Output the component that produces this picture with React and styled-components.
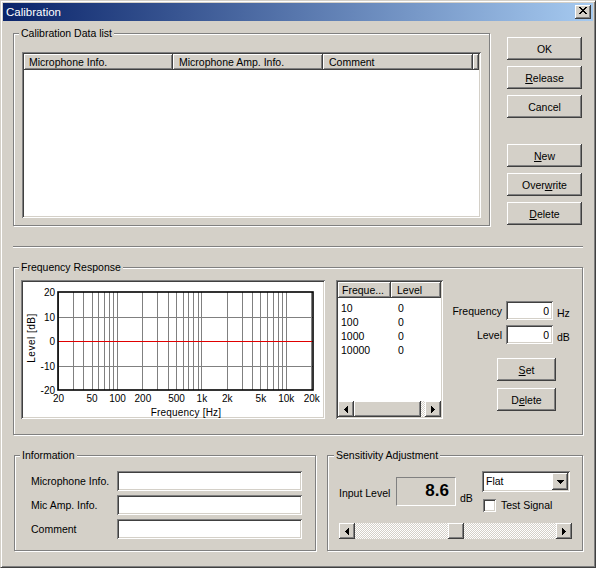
import React from "react";
import styled, { createGlobalStyle } from "styled-components";

const FACE = "#D4D0C8";

const GlobalStyle = createGlobalStyle`
  html, body { margin: 0; padding: 0; background: ${FACE}; }
  body {
    font-family: "Liberation Sans", Arial, sans-serif;
    font-size: 10.5px;
    color: #000;
  }
  *, *::before, *::after { box-sizing: border-box; }
`;

const raisedBevel = `
  background: ${FACE};
  box-shadow: inset -1px -1px #404040, inset 1px 1px #fff, inset -2px -2px #808080, inset 2px 2px ${FACE};
`;
const sunkenBevel = `
  box-shadow: inset 1px 1px #808080, inset -1px -1px #fff, inset 2px 2px #404040, inset -2px -2px ${FACE};
`;

const Window = styled.div`
  width: 596px;
  height: 568px;
  background: ${FACE};
  border: 1px solid;
  border-color: ${FACE} #404040 #404040 ${FACE};
  box-shadow: inset 1px 1px #fff, inset -1px -1px #808080;
  padding: 2px;
  display: flex;
  flex-direction: column;
  overflow: hidden;
`;

const TitleBar = styled.div`
  height: 18px;
  flex: none;
  display: flex;
  align-items: center;
  padding: 0 2px 0 2px;
  background: linear-gradient(to right, #0a246a, #a6caf0);
  color: #fff;
  font-size: 11.5px;
`;

const TitleText = styled.span`
  flex: 1;
  line-height: 18px;
  padding-left: 1px;
`;

const CloseButton = styled.div`
  width: 16px;
  height: 14px;
  ${raisedBevel}
  display: flex;
  align-items: flex-start;
  justify-content: center;
  padding-top: 2px;
`;

const Body = styled.div`
  display: flex;
  flex-direction: column;
  padding: 6px 10px 0 10px;
`;

const TopRow = styled.div`
  display: flex;
  gap: 17px;
  align-items: flex-start;
`;

const Group = styled.fieldset`
  display: block;
  margin: ${(p) => p.$mt || 0}px 0 0 ${(p) => p.$ml || 0}px;
  min-width: 0;
  width: ${(p) => p.$w}px;
  height: ${(p) => p.$h}px;
  padding: ${(p) => p.$pad};
  border: 1px solid #808080;
  box-shadow: 1px 1px 0 #fff, inset 1px 1px 0 #fff;
  flex: none;
`;

const Legend = styled.legend`
  margin-left: ${(p) => p.$lm}px;
  padding: 0 2px;
  line-height: 13px;
  background: ${FACE};
`;

const ListView = styled.div`
  display: flex;
  flex-direction: column;
  width: ${(p) => p.$w}px;
  height: ${(p) => p.$h}px;
  background: #fff;
  padding: 2px;
  ${sunkenBevel}
  flex: none;
`;

const HeaderRow = styled.div`
  display: flex;
  height: 16px;
  flex: none;
`;

const HeaderCell = styled.div`
  ${raisedBevel}
  width: ${(p) => (p.$w ? `${p.$w}px` : "auto")};
  flex: ${(p) => (p.$w ? "none" : "1")};
  padding-left: ${(p) => p.$pl || 0}px;
  line-height: 16px;
  white-space: nowrap;
  overflow: hidden;
`;

const ListBody = styled.div`
  flex: 1;
  padding-top: 3px;
`;

const ListRow = styled.div`
  display: flex;
  height: 14px;
  line-height: 14px;
`;

const ListCell = styled.div`
  width: ${(p) => p.$w}px;
  padding-left: ${(p) => p.$pl}px;
  white-space: nowrap;
`;

const HScroll = styled.div`
  display: flex;
  height: 16px;
  width: ${(p) => (p.$w ? `${p.$w}px` : "auto")};
  flex: none;
  margin-top: ${(p) => p.$mt || 0}px;
`;

const ScrollButton = styled.div`
  width: 16px;
  height: 100%;
  flex: none;
  ${raisedBevel}
  display: flex;
  align-items: center;
  justify-content: center;
`;

const ScrollTrack = styled.div`
  flex: 1;
  display: flex;
  background-color: #fff;
  background-image: repeating-conic-gradient(${FACE} 0 25%, #fff 0 50%);
  background-size: 2px 2px;
`;

const ScrollThumb = styled.div`
  ${raisedBevel}
  width: ${(p) => p.$w}px;
  height: 100%;
  flex: none;
`;

const ButtonColumn = styled.div`
  display: flex;
  flex-direction: column;
  gap: 6px;
  padding-top: 10px;
`;

const Button = styled.button`
  ${raisedBevel}
  border: none;
  outline: none;
  font: inherit;
  color: #000;
  width: ${(p) => p.$w || 75}px;
  height: 23px;
  padding: 0;
  margin-top: ${(p) => p.$mt || 0}px;
  flex: none;
`;

const Key = styled.span`
  text-decoration: underline;
`;

const Separator = styled.div`
  height: 2px;
  margin-top: 20px;
  border-top: 1px solid #808080;
  border-bottom: 1px solid #fff;
`;

const FreqRow = styled.div`
  display: flex;
`;

const ChartBox = styled.div`
  width: 304px;
  height: 139px;
  background: #fff;
  padding: 2px;
  ${sunkenBevel}
  flex: none;
  margin-right: 11px;
`;

const Controls = styled.div`
  flex: 1;
  display: flex;
  flex-direction: column;
`;

const FieldGrid = styled.div`
  display: grid;
  grid-template-columns: 59px 47px auto;
  column-gap: 4px;
  row-gap: 5px;
  margin-top: 21px;
`;

const FieldLabel = styled.span`
  justify-self: end;
  align-self: center;
`;

const Unit = styled.span`
  align-self: end;
  line-height: 13px;
`;

const TextInput = styled.input`
  border: 0;
  outline: 0;
  margin: 0;
  font: inherit;
  color: #000;
  background: #fff;
  ${sunkenBevel}
  width: ${(p) => p.$w}px;
  height: ${(p) => p.$h}px;
  padding: 0 ${(p) => (p.$right ? 4 : 3)}px;
  text-align: ${(p) => (p.$right ? "right" : "left")};
`;

const ButtonStack = styled.div`
  display: flex;
  flex-direction: column;
  gap: 7px;
  margin-top: 14px;
  padding-left: 54px;
`;

const BottomRow = styled.div`
  display: flex;
  gap: 11px;
  margin-top: 14px;
`;

const InfoGrid = styled.div`
  display: grid;
  grid-template-columns: 86px 185px;
  grid-auto-rows: 20px;
  row-gap: 4px;
  align-items: center;
`;

const SensGrid = styled.div`
  display: grid;
  grid-template-columns: 57px 60px 26px 1fr;
  grid-template-rows: 21px 13px;
  row-gap: 7px;
`;

const SensLabel = styled.span`
  grid-column: 1;
  grid-row: 1 / span 2;
  align-self: center;
  padding-top: 2px;
`;

const LevelDisplay = styled.div`
  grid-column: 2;
  grid-row: 1 / span 2;
  align-self: center;
  height: 29px;
  border: 1px solid;
  border-color: #808080 #fff #fff #808080;
  font-weight: bold;
  font-size: 17px;
  line-height: 26px;
  text-align: right;
  padding-right: 6px;
`;

const DbUnit = styled.span`
  grid-column: 3;
  grid-row: 1 / span 2;
  align-self: end;
  padding-left: 4px;
  margin-bottom: 7px;
  line-height: 13px;
`;

const Combo = styled.div`
  grid-column: 4;
  grid-row: 1;
  width: 88px;
  height: 21px;
  background: #fff;
  padding: 2px;
  ${sunkenBevel}
  display: flex;
`;

const ComboText = styled.span`
  flex: 1;
  padding-left: 2px;
  line-height: 17px;
`;

const ComboButton = styled.div`
  width: 16px;
  ${raisedBevel}
  display: flex;
  align-items: center;
  justify-content: center;
`;

const CheckRow = styled.label`
  grid-column: 4;
  grid-row: 2;
  display: flex;
  align-items: center;
  gap: 5px;
  padding-left: 1px;
  line-height: 13px;
`;

const CheckBox = styled.span`
  width: 13px;
  height: 13px;
  flex: none;
  background: #fff;
  ${sunkenBevel}
`;

const Glyph = ({ w, h, d }) => (
  <svg width={w} height={h} viewBox={`0 0 ${w} ${h}`} shapeRendering="crispEdges" style={{ display: "block" }}>
    <path d={d} fill="#000" />
  </svg>
);

const X_PATH =
  "M0 0h2v1h-2z M6 0h2v1h-2z M1 1h2v1h-2z M5 1h2v1h-2z M2 2h4v1h-4z M3 3h2v1h-2z M2 4h4v1h-4z M1 5h2v1h-2z M5 5h2v1h-2z M0 6h2v1h-2z M6 6h2v1h-2z";
const LEFT_PATH = "M3 0h1v7h-1z M2 1h1v5h-1z M1 2h1v3h-1z M0 3h1v1h-1z";
const RIGHT_PATH = "M0 0h1v7h-1z M1 1h1v5h-1z M2 2h1v3h-1z M3 3h1v1h-1z";
const DOWN_PATH = "M0 0h7v1h-7z M1 1h5v1h-5z M2 2h3v1h-3z M3 3h1v1h-1z";

const FREQS = [
  20, 30, 40, 50, 60, 70, 80, 90, 100, 200, 300, 400, 500, 600, 700, 800, 900, 1000, 2000, 3000, 4000,
  5000, 6000, 7000, 8000, 9000, 10000, 20000,
];
const X_LABELS = [
  [20, "20"],
  [50, "50"],
  [100, "100"],
  [200, "200"],
  [500, "500"],
  [1000, "1k"],
  [2000, "2k"],
  [5000, "5k"],
  [10000, "10k"],
  [20000, "20k"],
];
const Y_LEVELS = [
  [20, 10],
  [10, 35],
  [0, 59],
  [-10, 84],
  [-20, 108],
];
const fx = (f) => 35 + 84.4 * Math.log10(f / 20);

const ResponseChart = () => (
  <svg width="300" height="135" viewBox="0 0 300 135" style={{ display: "block", overflow: "visible" }}>
    <g fontFamily="'Liberation Sans', Arial, sans-serif" fontSize="10" fill="#000">
      {FREQS.map((f) => (
        <line
          key={f}
          x1={Math.round(fx(f)) + 0.5}
          x2={Math.round(fx(f)) + 0.5}
          y1="10"
          y2="108"
          stroke="#808080"
          strokeWidth="1"
        />
      ))}
      {[35, 84].map((y) => (
        <line key={y} x1="35" x2="290" y1={y + 0.5} y2={y + 0.5} stroke="#808080" strokeWidth="1" />
      ))}
      <line x1="35" x2="290" y1="59.5" y2="59.5" stroke="#e00000" strokeWidth="1.2" />
      <rect x="35" y="10" width="255" height="98" fill="none" stroke="#000" strokeWidth="1.6" />
      {Y_LEVELS.map(([v, y]) => (
        <text key={v} x="32" y={y + 4} textAnchor="end">
          {v}
        </text>
      ))}
      {X_LABELS.map(([f, t]) => (
        <text key={f} x={fx(f) + 0.5} y="120" textAnchor="middle">
          {t}
        </text>
      ))}
      <text x="163" y="133.5" textAnchor="middle" letterSpacing="0.2">
        Frequency [Hz]
      </text>
      <text transform="translate(12 56) rotate(-90)" textAnchor="middle" letterSpacing="0.5">
        Level [dB]
      </text>
    </g>
  </svg>
);

const Scrollbar = ({ width, thumbWidth, pos }) => (
  <HScroll $w={width}>
    <ScrollButton>
      <Glyph w={4} h={7} d={LEFT_PATH} />
    </ScrollButton>
    <ScrollTrack>
      <ScrollThumb $w={thumbWidth} style={{ marginLeft: pos }} />
    </ScrollTrack>
    <ScrollButton>
      <Glyph w={4} h={7} d={RIGHT_PATH} />
    </ScrollButton>
  </HScroll>
);

const POINTS = [
  ["10", "0"],
  ["100", "0"],
  ["1000", "0"],
  ["10000", "0"],
];

export default function App() {
  const sliderValue = 0.503;
  const sliderTrack = 233 - 32 - 16;
  return (
    <>
      <GlobalStyle />
      <Window>
        <TitleBar>
          <TitleText>Calibration</TitleText>
          <CloseButton>
            <Glyph w={8} h={7} d={X_PATH} />
          </CloseButton>
        </TitleBar>
        <Body>
          <TopRow>
            <Group $w={477} $h={199} $pad="12px 8px 7px 8px">
              <Legend $lm={-3}>Calibration Data list</Legend>
              <ListView $w={459} $h={166}>
                <HeaderRow>
                  <HeaderCell $w={149} $pl={5}>
                    Microphone Info.
                  </HeaderCell>
                  <HeaderCell $w={150} $pl={6}>
                    Microphone Amp. Info.
                  </HeaderCell>
                  <HeaderCell $w={150} $pl={6}>
                    Comment
                  </HeaderCell>
                  <HeaderCell />
                </HeaderRow>
                <ListBody />
              </ListView>
            </Group>
            <ButtonColumn>
              <Button>OK</Button>
              <Button>
                <Key>R</Key>elease
              </Button>
              <Button>Cancel</Button>
              <Button $mt={20}>
                <Key>N</Key>ew
              </Button>
              <Button>
                Over<Key>w</Key>rite
              </Button>
              <Button>
                <Key>D</Key>elete
              </Button>
            </ButtonColumn>
          </TopRow>

          <Separator />

          <Group $w={570} $h={174} $mt={13} $pad="6px 0 0 7px">
            <Legend $lm={-2}>Frequency Response</Legend>
            <FreqRow>
              <ChartBox>
                <ResponseChart />
              </ChartBox>
              <ListView $w={107} $h={139}>
                <HeaderRow>
                  <HeaderCell $w={53} $pl={4}>
                    Freque...
                  </HeaderCell>
                  <HeaderCell $pl={6}>Level</HeaderCell>
                </HeaderRow>
                <ListBody>
                  {POINTS.map(([f, l]) => (
                    <ListRow key={f}>
                      <ListCell $w={53} $pl={3}>
                        {f}
                      </ListCell>
                      <ListCell $w={50} $pl={7}>
                        {l}
                      </ListCell>
                    </ListRow>
                  ))}
                </ListBody>
                <Scrollbar width={103} thumbWidth={67} pos={0} />
              </ListView>
              <Controls>
                <FieldGrid>
                  <FieldLabel>Frequency</FieldLabel>
                  <TextInput $w={47} $h={19} $right readOnly value="0" />
                  <Unit>Hz</Unit>
                  <FieldLabel>Level</FieldLabel>
                  <TextInput $w={47} $h={19} $right readOnly value="0" />
                  <Unit>dB</Unit>
                </FieldGrid>
                <ButtonStack>
                  <Button $w={59}>
                    <Key>S</Key>et
                  </Button>
                  <Button $w={59}>
                    D<Key>e</Key>lete
                  </Button>
                </ButtonStack>
              </Controls>
            </FreqRow>
          </Group>

          <BottomRow>
            <Group $w={302} $h={102} $ml={1} $pad="9px 0 0 16px">
              <Legend $lm={-11}>Information</Legend>
              <InfoGrid>
                <span>Microphone Info.</span>
                <TextInput $w={185} $h={20} readOnly value="" />
                <span>Mic Amp. Info.</span>
                <TextInput $w={185} $h={20} readOnly value="" />
                <span>Comment</span>
                <TextInput $w={185} $h={20} readOnly value="" />
              </InfoGrid>
            </Group>
            <Group $w={256} $h={102} $pad="9px 0 0 11px">
              <Legend $lm={-5}>Sensitivity Adjustment</Legend>
              <SensGrid>
                <SensLabel>Input Level</SensLabel>
                <LevelDisplay>8.6</LevelDisplay>
                <DbUnit>dB</DbUnit>
                <Combo>
                  <ComboText>Flat</ComboText>
                  <ComboButton>
                    <Glyph w={7} h={4} d={DOWN_PATH} />
                  </ComboButton>
                </Combo>
                <CheckRow>
                  <CheckBox />
                  Test Signal
                </CheckRow>
              </SensGrid>
              <HScroll $w={233} $mt={11}>
                <ScrollButton>
                  <Glyph w={4} h={7} d={LEFT_PATH} />
                </ScrollButton>
                <ScrollTrack>
                  <ScrollThumb $w={16} style={{ marginLeft: Math.round(sliderValue * sliderTrack) }} />
                </ScrollTrack>
                <ScrollButton>
                  <Glyph w={4} h={7} d={RIGHT_PATH} />
                </ScrollButton>
              </HScroll>
            </Group>
          </BottomRow>
        </Body>
      </Window>
    </>
  );
}
